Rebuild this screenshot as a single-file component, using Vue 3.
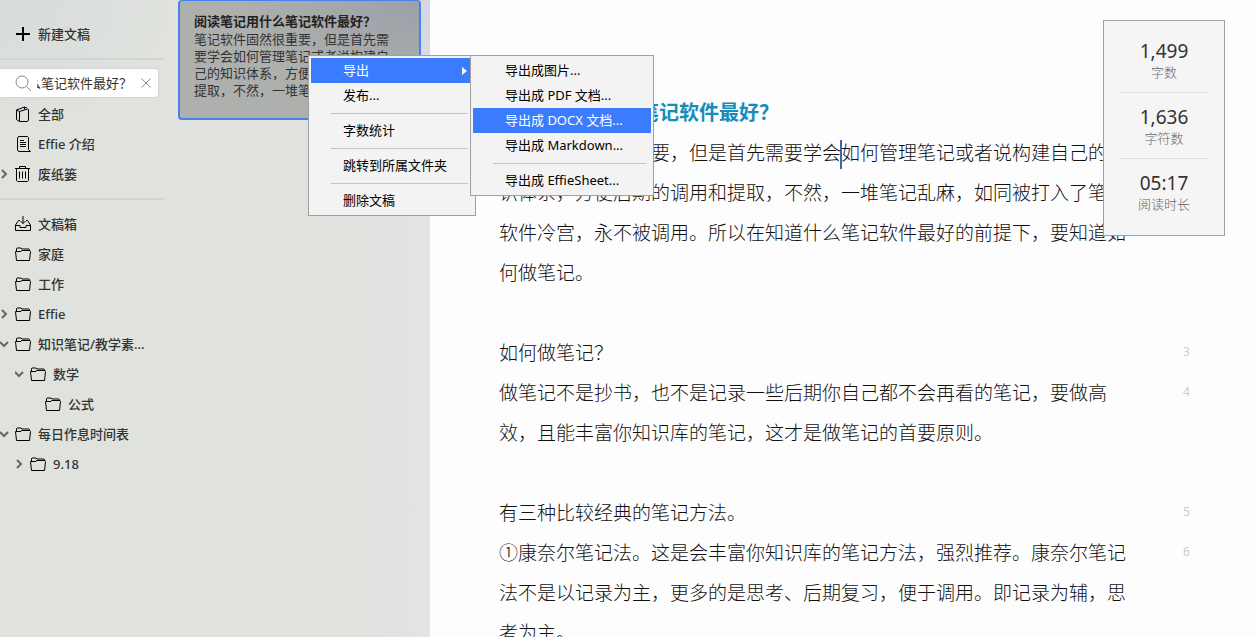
<script setup>
import { onMounted, ref } from 'vue'

const query = ref('阅读笔记用什么笔记软件最好？')
const searchBox = ref(null)

const shortcuts = [
  { label: '全部', icon: 'all' },
  { label: 'Effie 介绍', icon: 'doc' },
  { label: '废纸篓', icon: 'trash', arrow: 'closed' }
]
const folders = [
  { label: '文稿箱', icon: 'inbox' },
  { label: '家庭', icon: 'folder' },
  { label: '工作', icon: 'folder' },
  { label: 'Effie', icon: 'folder', arrow: 'closed' },
  { label: '知识笔记/教学素...', icon: 'folder', arrow: 'open' },
  { label: '数学', icon: 'folder', arrow: 'open', level: 1 },
  { label: '公式', icon: 'folder', level: 2 },
  { label: '每日作息时间表', icon: 'folder', arrow: 'open' },
  { label: '9.18', icon: 'folder', arrow: 'closed', level: 1 }
]
const groups = [shortcuts, folders]

const icons = {
  all: 'M1.5 4V13.500l3 2M1.5 4L9.5 1l2.500 1M1.5 4l3 1.500V15.500H12l1.500-1V3.500L12.500 3 4.5 5.500M9.500 1v2.500',
  doc: 'M2.500 14V2l1-1.500h9l1 1V13.500l2 2H3.500zM5 4.500h4M5 6.500h6M5 8.500h6M5 10.500h6',
  trash: 'M0 2.500h15M4.500 2.500V.5h6v2M1.500 2.500v12l1 1h10l1-1v-12M4.500 5.500v7M7.500 5.500v7M10.500 5.500v7',
  inbox: 'M5 4.500H3.500L.5 9v5.500h15V9l-3-4.500H11M.5 9.500H5V11.500h6V9.500h4.500M8 0v7.500M5.500 5L8 7.500 10.500 5',
  folder: 'M1.500 5V2.500l.5-.5h4l1 1h7l.5.5V5M.5 5.500L1.500 14.500h13l1-9L15 4.500H6.500l-.5 1z'
}

const paragraphs = [
  { no: 2, parts: ['笔记软件固然很重要，但是首先需要学会', '如何管理笔记或者说构建自己的知识体系，方便后期的调用和提取，不然，一堆笔记乱麻，如同被打入了笔记软件冷宫，永不被调用。所以在知道什么笔记软件最好的前提下，要知道如何做笔记。'], gap: true },
  { no: 3, parts: ['如何做笔记？'] },
  { no: 4, parts: ['做笔记不是抄书，也不是记录一些后期你自己都不会再看的笔记，要做高效，且能丰富你知识库的笔记，这才是做笔记的首要原则。'], gap: true },
  { no: 5, parts: ['有三种比较经典的笔记方法。'] },
  { no: 6, parts: ['①康奈尔笔记法。这是会丰富你知识库的笔记方法，强烈推荐。康奈尔笔记法不是以记录为主，更多的是思考、后期复习，便于调用。即记录为辅，思考为主。'] }
]

const stats = [
  { value: '1,499', label: '字数' },
  { value: '1,636', label: '字符数' },
  { value: '05:17', label: '阅读时长' }
]

const mainMenu = [['导出', '发布...'], ['字数统计'], ['跳转到所属文件夹'], ['删除文稿']]
const exportMenu = [
  ['导出成图片...', '导出成 PDF 文档...', '导出成 DOCX 文档...', '导出成 Markdown...'],
  ['导出成 EffieSheet...']
]

onMounted(() => {
  searchBox.value.scrollLeft = searchBox.value.scrollWidth
})
</script>

<template>
  <div class="app">
    <div class="left">
      <nav class="sidebar">
        <button class="row new" type="button">
          <svg class="icon plus" viewBox="0 0 16 16"><path d="M8 1v14M1 8h14" /></svg>
          <span>新建文稿</span>
        </button>
        <hr class="rule" />
        <div class="search">
          <svg class="lens" viewBox="0 0 17 17"><circle cx="7" cy="7" r="6" /><path d="M11.500 11.500L16 16" /></svg>
          <input ref="searchBox" v-model="query" type="text" aria-label="搜索" />
          <button type="button" aria-label="清除">
            <svg viewBox="0 0 10 10"><path d="M.5.5l9 9M9.500.5l-9 9" /></svg>
          </button>
        </div>
        <template v-for="(group, g) in groups" :key="g">
          <hr v-if="g" class="rule" />
          <ul class="tree">
            <li v-for="item in group" :key="item.label">
              <button class="row" :class="'level-' + (item.level || 0)" type="button">
                <span class="arrow">
                  <svg v-if="item.arrow === 'closed'" viewBox="0 0 10 10"><path d="M2 1l4 4-4 4" /></svg>
                  <svg v-else-if="item.arrow === 'open'" viewBox="0 0 10 10"><path d="M0 3l4 4 4-4" /></svg>
                </span>
                <svg class="icon" viewBox="0 0 16 16"><path :d="icons[item.icon]" /></svg>
                <span>{{ item.label }}</span>
              </button>
            </li>
          </ul>
        </template>
      </nav>
      <section class="list">
        <article class="card">
          <h2>阅读笔记用什么笔记软件最好？</h2>
          <p>笔记软件固然很重要，但是首先需要学会如何管理笔记或者说构建自己的知识体系，方便后期的调用和提取，不然，一堆笔记乱麻，如同</p>
        </article>
      </section>
    </div>

    <main class="editor">
      <h1>阅读笔记用什么笔记软件最好？</h1>
      <div v-for="p in paragraphs" :key="p.no" class="para" :class="{ gap: p.gap }">
        <p><template v-for="(part, i) in p.parts" :key="i"><span v-if="i" class="caret"></span>{{ part }}</template></p>
        <span class="no">{{ p.no }}</span>
      </div>
    </main>

    <aside class="stats">
      <div v-for="s in stats" :key="s.label" class="stat">
        <strong>{{ s.value }}</strong>
        <span>{{ s.label }}</span>
      </div>
    </aside>

    <div class="menu main-menu" role="menu">
      <div v-for="(group, g) in mainMenu" :key="g" class="menu-group">
        <button v-for="item in group" :key="item" type="button" role="menuitem" :class="{ active: item === '导出' }">
          {{ item }}
          <svg v-if="item === '导出'" class="more" viewBox="0 0 5 8"><path d="M0 0l5 4-5 4z" /></svg>
        </button>
      </div>
    </div>
    <div class="menu export-menu" role="menu">
      <div v-for="(group, g) in exportMenu" :key="g" class="menu-group">
        <button v-for="item in group" :key="item" type="button" role="menuitem" :class="{ active: item.includes('DOCX') }">{{ item }}</button>
      </div>
    </div>
  </div>
</template>

<style>
body {
  margin: 0;
  overflow: hidden;
}
</style>

<style scoped>
* {
  box-sizing: border-box;
}
.app {
  position: relative;
  display: flex;
  height: 100vh;
  overflow: hidden;
  background: #fdfdfd;
  font: 13px/17px "Noto Sans", "Noto Sans CJK SC", sans-serif;
  color: #333;
}
button,
input {
  font: inherit;
  color: inherit;
  background: none;
  border: 0;
  padding: 0;
  margin: 0;
  text-align: left;
}
svg {
  display: block;
  fill: none;
  stroke: currentColor;
}
.left {
  flex: 0 0 430px;
  display: flex;
  background:
    radial-gradient(ellipse 160px 150px at 100% 0, #d3d7e0, transparent),
    radial-gradient(ellipse 180px 130px at 0 0, #d8dcda, transparent),
    linear-gradient(90deg, #dfe2dd 78%, #e4e3e5);
}
.sidebar {
  width: 165px;
}
.row {
  display: flex;
  align-items: center;
  width: 100%;
  height: 30px;
  font-weight: 500;
  white-space: nowrap;
}
.row.new {
  padding-left: 15px;
  margin-top: 19px;
}
.level-1 {
  padding-left: 15px;
}
.level-2 {
  padding-left: 30px;
}
.icon {
  width: 16px;
  height: 16px;
  margin-right: 7px;
  color: #000;
}
.plus {
  stroke-width: 2;
}
.arrow {
  width: 15px;
  color: #666;
}
.arrow svg {
  width: 10px;
  height: 10px;
  stroke-width: 2;
}
.rule {
  height: 2px;
  margin: 9px 0;
  border: 0;
  background: #d2d5d1;
}
.search {
  display: flex;
  align-items: center;
  width: 158px;
  height: 28px;
  margin-bottom: 2px;
  padding: 0 7px 0 15px;
  border-radius: 0 3px 3px 0;
  background: #fff;
  box-shadow: 0 0 2px #bbb;
}
.lens {
  flex: none;
  width: 17px;
  height: 17px;
  margin-right: 5px;
  color: #888;
}
.search input {
  flex: 1;
  min-width: 0;
  height: 22px;
  margin-bottom: 2px;
  outline: 0;
}
.search button {
  margin-left: 9px;
  color: #888;
}
.search button svg {
  width: 10px;
  height: 10px;
}
.tree {
  margin: 0;
  padding: 0;
  list-style: none;
}
.list {
  flex: 1;
  padding: 0 9px 0 13px;
}
.card {
  height: 120px;
  padding: 10px 14px;
  border: 2px solid #4a80ee;
  border-top-width: 1px;
  border-radius: 4px;
  background: radial-gradient(ellipse 190px 100px at 100% 0, #9ba1a9, #aeb0ad);
}
.card h2 {
  margin: 0;
  font-size: 13px;
  line-height: 20px;
  color: #222;
}
.card p {
  margin: 0 12px 0 0;
}
.editor {
  flex: 1;
  min-width: 0;
  padding: 92px 65px 0 69px;
  font: 19px/40px "Noto Sans CJK SC", sans-serif;
}
.editor h1 {
  margin: 0;
  font-size: 20px;
  line-height: 40px;
  color: #168cb8;
}
.para {
  display: flex;
  gap: 44px;
}
.para.gap {
  margin-bottom: 40px;
}
.para p {
  flex: 1;
  margin: 0;
  font-weight: 300;
  color: #111;
}
.no {
  width: 8px;
  font: 12px/40px "Noto Sans", sans-serif;
  color: #ccc;
}
.caret {
  display: inline-block;
  width: 2px;
  height: 29px;
  margin: 0 -1px;
  vertical-align: middle;
  background: #3a6aa5;
}
.stats {
  position: absolute;
  top: 20px;
  right: 31px;
  width: 122px;
  padding: 6px 16px 11px;
  border: 1px solid #a0a0a0;
  background: #f5f5f5;
  text-align: center;
}
.stat {
  padding: 12px 0 10px;
}
.stat + .stat {
  border-top: 1px solid #e0e0e0;
}
.stat strong {
  display: block;
  font-size: 19px;
  line-height: 24px;
  font-weight: 400;
}
.stat span {
  display: block;
  line-height: 19px;
  font-weight: 300;
  color: #666;
}
.menu {
  position: absolute;
  top: 55px;
  padding: 2px;
  border: 1px solid #a0a0a0;
  background: #f3f3f3;
  color: #000;
}
.main-menu {
  left: 308px;
  width: 168px;
}
.export-menu {
  left: 470px;
  width: 184px;
}
.menu button {
  display: flex;
  align-items: center;
  justify-content: space-between;
  width: 100%;
  height: 25px;
  padding: 0 6px 0 32px;
  white-space: nowrap;
}
.menu .active {
  background: #3b7cff;
  color: #fff;
}
.menu-group + .menu-group::before {
  content: "";
  display: block;
  height: 1px;
  margin: 5px 5px 4px 20px;
  background: #c4c4c4;
}
.more {
  width: 5px;
  height: 8px;
  fill: #fff;
  stroke: none;
}
</style>
